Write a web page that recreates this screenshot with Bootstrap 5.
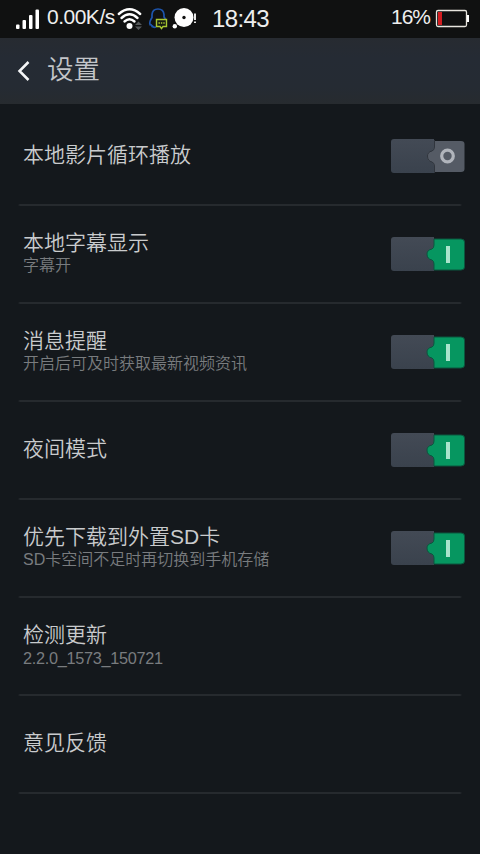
<!DOCTYPE html>
<html lang="zh-CN" data-bs-theme="dark">
<head>
<meta charset="utf-8">
<meta name="viewport" content="width=device-width, initial-scale=1">
<title>设置</title>
<link href="https://cdn.jsdelivr.net/npm/bootstrap@5.3.0/dist/css/bootstrap.min.css" rel="stylesheet">
<style>
  body{background:#14181c;font-family:"Liberation Sans","Noto Sans CJK SC",sans-serif;font-weight:350;color:#c9cbcd;height:854px;overflow:hidden}
  svg{display:block;flex:none}
  .status{height:38px;background:#101111;color:#eee;padding-left:15px;padding-right:11px;line-height:38px;white-space:nowrap}
  .net{width:70px;margin-left:7px;font-size:21px;letter-spacing:-.5px;line-height:33px}
  .clock{margin-left:13px;font-size:24px;letter-spacing:-.6px;line-height:37px}
  .power{font-size:21px;letter-spacing:-1px;line-height:33px;margin-right:5px}
  .topbar{height:66px;background:linear-gradient(#272b31,#252b34 30%,#252b33 75%,#272b2f);padding-left:17px}
  .topbar h1{font-size:26.5px;line-height:40px;font-weight:350;margin:-3px 0 0 16px;color:#c3c5c9}
  .settings{margin-top:4px;padding:0 18px}
  .setting{height:98px;padding:0 0 2px 5px;margin-right:-4px;background:linear-gradient(90deg,transparent,#262a2e 2px,#262a2e 442px,transparent 444px) left bottom/444px 2px no-repeat}
  .label-main{font-size:21px;line-height:24px}
  .label-sub{font-size:16px;line-height:20px;color:#797c7f;padding-top:1px;margin-bottom:-1px}
  .labels{padding-bottom:2px;white-space:nowrap}
  .label-sub.version{font-size:16.3px;letter-spacing:-.3px}
</style>
<script src="https://cdn.jsdelivr.net/npm/bootstrap@5.3.0/dist/js/bootstrap.bundle.min.js"></script>
</head>
<body>
<svg width="0" height="0" class="position-absolute" aria-hidden="true">
  <defs>
    <linearGradient id="track" x2="0" y2="1"><stop stop-color="#434a55"/><stop offset="1" stop-color="#3a424d"/></linearGradient>
    <symbol id="on" viewBox="0 0 76 36">
      <path d="M4 1H44V35H4Q1 35 1 32V4Q1 1 4 1Z" fill="url(#track)"/>
      <path d="M44 3H71Q74.500 3 74.500 6V31Q74.500 34 71 34H44V28Q44 25 42 24Q37 23 37 18Q37 14 42 13Q44 12 44 9Z" fill="#069660" stroke="#0a573e" stroke-width="1"/>
      <path d="M58 10V27" stroke="#a9e4cc" stroke-width="4"/>
    </symbol>
    <symbol id="off" viewBox="0 0 76 36">
      <path d="M4 1H44V35H4Q1 35 1 32V4Q1 1 4 1Z" fill="url(#track)"/>
      <path d="M44 3H71Q74.500 3 74.500 6V31Q74.500 34 71 34H44V28Q44 25 42 24Q37 23 37 18Q37 14 42 13Q44 12 44 9Z" fill="#555b65"/>
      <path d="M44.500 2V9Q44.500 12 42 13Q37.500 14 37.500 18Q37.500 23 42 24Q44.500 25 44.500 28V35" fill="none" stroke="#30353d"/>
      <circle cx="57.500" cy="18" r="5.800" fill="none" stroke="#b1b5bc" stroke-width="3.200"/>
    </symbol>
  </defs>
</svg>

<header class="status d-flex align-items-start">
  <svg width="25" height="38" viewBox="15 0 25 38" fill="#fff"><rect x="16" y="24.500" width="3.500" height="4.500" rx="1"/><rect x="22.500" y="20" width="3.500" height="9" rx="1"/><rect x="29" y="15" width="3.500" height="14" rx="1"/><rect x="35.500" y="9.500" width="3.500" height="19.500" rx="1"/></svg>
  <span class="net">0.00K/s</span>
  <svg width="82" height="38" viewBox="117 0 82 38" fill="none">
    <g stroke="#fff" stroke-width="2.400" stroke-linecap="round"><path d="M118.800 14Q129.500 4.500 140.200 14"/><path d="M121.500 18Q129.500 10.500 137.500 18"/><path d="M124.500 21.500Q129.500 17 134.500 21.500"/></g>
    <circle cx="129.500" cy="26" r="3" fill="#fff"/>
    <path d="M138.500 21.500L142 25H135ZM138.500 30L142 26.500H135Z" fill="#55585a"/>
    <path d="M152.500 27Q151 24 150 24.500Q149 22 152 17.500V14.500Q152.500 9 158 9Q163.500 9 164 14.500V17L165.500 19M152 25.500Q153.500 28 156 27" stroke="#1d55ad" stroke-width="1.700"/>
    <path d="M156.500 19.500H166.500V26.500H163L161.500 28.500L160 26.500H156.500Z" fill="#161b12" stroke="#a9c832" stroke-width="1.400"/>
    <path d="M158.500 23H165" stroke="#a9c832" stroke-width="1.400" stroke-dasharray="1.400 1"/>
    <circle cx="184" cy="17.500" r="9.500" fill="#fff"/><circle cx="184" cy="17.500" r="1.700" fill="#111"/>
    <circle cx="174.800" cy="26.200" r="2.200" fill="#fff"/>
    <path d="M195 13.500V20M195 21.500V23" stroke="#fff" stroke-width="1.800"/>
  </svg>
  <span class="clock">18:43</span>
  <span class="power ms-auto">16%</span>
  <svg width="34" height="38" viewBox="435 0 34 38"><rect x="436.500" y="10.500" width="30" height="16" rx="1.500" fill="none" stroke="#e8e6df" stroke-width="1.300"/><rect x="438" y="12" width="4" height="13" fill="#d11d20"/><path d="M467 15H469V22H467Z" fill="#fff"/></svg>
</header>

<nav class="topbar d-flex align-items-center">
  <svg width="14" height="22" viewBox="0 0 14 22"><path d="M11.500 2L2.500 11L11.500 20" fill="none" stroke="#f5f6f7" stroke-width="2.500"/></svg>
  <h1>设置</h1>
</nav>

<main class="settings">
  <div class="setting d-flex align-items-center justify-content-between"><div class="labels"><div class="label-main">本地影片循环播放</div></div><svg width="76" height="36"><use href="#off"/></svg></div>
  <div class="setting d-flex align-items-center justify-content-between"><div class="labels"><div class="label-main">本地字幕显示</div><div class="label-sub">字幕开</div></div><svg width="76" height="36"><use href="#on"/></svg></div>
  <div class="setting d-flex align-items-center justify-content-between"><div class="labels"><div class="label-main">消息提醒</div><div class="label-sub">开启后可及时获取最新视频资讯</div></div><svg width="76" height="36"><use href="#on"/></svg></div>
  <div class="setting d-flex align-items-center justify-content-between"><div class="labels"><div class="label-main">夜间模式</div></div><svg width="76" height="36"><use href="#on"/></svg></div>
  <div class="setting d-flex align-items-center justify-content-between"><div class="labels"><div class="label-main">优先下载到外置SD卡</div><div class="label-sub">SD卡空间不足时再切换到手机存储</div></div><svg width="76" height="36"><use href="#on"/></svg></div>
  <div class="setting d-flex align-items-center"><div class="labels"><div class="label-main">检测更新</div><div class="label-sub version">2.2.0_1573_150721</div></div></div>
  <div class="setting d-flex align-items-center"><div class="labels"><div class="label-main">意见反馈</div></div></div>
</main>
</body>
</html>
